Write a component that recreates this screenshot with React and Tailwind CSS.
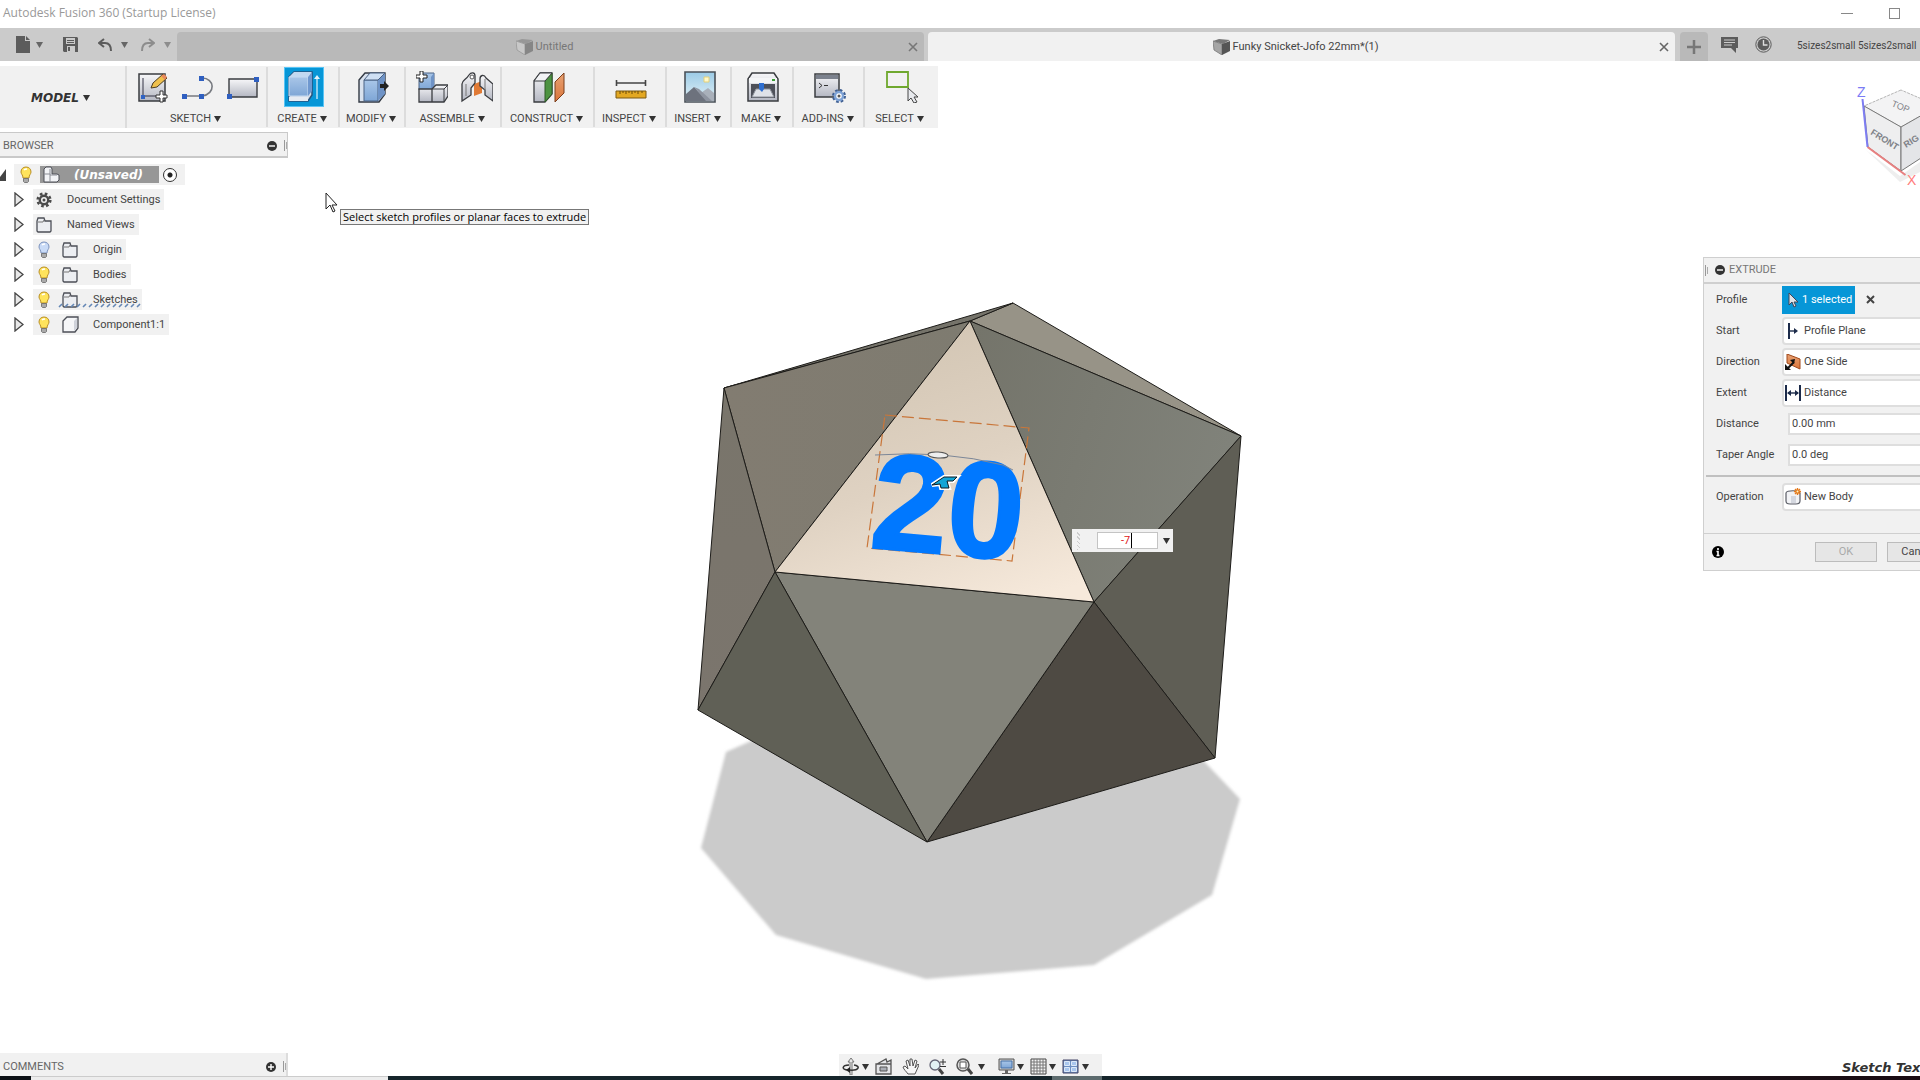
import React from "react";

const UI_FONT = "font-['Roboto','Liberation_Sans',sans-serif]";

function Caret({ className = "text-[#333]" }) {
  return (
    <svg viewBox="0 0 7 6" className={"h-[6px] w-[7px] shrink-0 " + className}>
      <path d="M0 0h7L3.5 6z" fill="currentColor" />
    </svg>
  );
}

function Icon({ w = 32, h = 32, children, className = "" }) {
  return (
    <svg width={w} height={h} viewBox={`0 0 ${w} ${h}`} className={"shrink-0 " + className} fill="none" aria-hidden="true">
      {children}
    </svg>
  );
}

function Gradients() {
  return (
    <svg width="0" height="0" className="absolute" aria-hidden="true">
      <defs>
        <linearGradient id="steel" x1="0" y1="0" x2="0" y2="1">
          <stop offset="0" stopColor="#f7f7f9" />
          <stop offset="1" stopColor="#b4b7c2" />
        </linearGradient>
        <linearGradient id="blue" x1="0" y1="0" x2="0" y2="1">
          <stop offset="0" stopColor="#a9c6e8" />
          <stop offset="1" stopColor="#7ea6d6" />
        </linearGradient>
        <linearGradient id="sky" x1="0" y1="0" x2="0" y2="1">
          <stop offset="0" stopColor="#9ccbe6" />
          <stop offset="1" stopColor="#e3f2f7" />
        </linearGradient>
        <linearGradient id="orange" x1="0" y1="0" x2="0" y2="1">
          <stop offset="0" stopColor="#e8a273" />
          <stop offset="1" stopColor="#d9743a" />
        </linearGradient>
      </defs>
    </svg>
  );
}

const PLUS = "M4 0h3v4h4v3H7v4H4V7H0V4h4z";

const SketchIcon = () => (
  <Icon>
    <path d="M2 3h26v27H2z" fill="url(#steel)" stroke="#3a3c40" strokeWidth="1.500" />
    <path d="M6 7v18h14" stroke="#334" strokeWidth="1" />
    <path d="M4 24h4v4H4z" fill="#2f63c4" />
    <path d="M14 17l2-5L26 3l4 4-10 9z" fill="#efc04c" stroke="#4a3b20" />
    <path d="M24 5l4 4 2-3-3-3z" fill="#e8895c" />
    <path d={PLUS} transform="translate(19 20)" fill="#fff" stroke="#333" />
  </Icon>
);
const LineIcon = () => (
  <Icon>
    <path d="M3 25h17c14-2 13-18 0-18" stroke="#777a80" strokeWidth="1.6" />
    <path d="M0 23h5v5H0zM17 23h5v5h-5zM17 5h5v5h-5z" fill="#2f5fc0" />
  </Icon>
);
const RectIcon = () => (
  <Icon>
    <path d="M2 8h28v18H2z" fill="url(#steel)" stroke="#3a3c40" strokeWidth="1.4" />
    <path d="M0 23h5v5H0zM27 6h5v5h-5z" fill="#2f5fc0" />
  </Icon>
);
const ExtrudeIcon = () => (
  <Icon w={38} h={38}>
    <path d="M4 9l5-5h18v23l-4 6H4z" fill="#d6dde8" stroke="#27527c" strokeWidth="1.500" />
    <path d="M4 9h19v19H4z" fill="url(#blue)" stroke="#c8dcf2" />
    <path d="M4 9l5-5h18l-4 5z" fill="#c3d9f1" />
    <path d="M23 9l4-5v19l-4 5z" fill="#6f98cf" />
    <path d="M4 29h19v4H4z" fill="#e6ebf2" />
    <path d="M32 31V10" stroke="#b9e0f5" strokeWidth="1.500" />
    <path d="M29 11l3-4 3 4z" fill="#dff1fb" />
  </Icon>
);
const ModifyIcon = () => (
  <Icon>
    <path d="M2 9l6-7h20v21l-6 8H2z" fill="#d9e2ee" stroke="#333a44" strokeWidth="1.4" />
    <path d="M7 9h14v21H7z" fill="url(#blue)" stroke="#4b6284" />
    <path d="M21 9l7-7v21l-7 7z" fill="#6f93c6" />
    <path d="M7 9l6-7h15l-7 7z" fill="#cfe0f4" stroke="#4b6284" />
    <path d="M23 13h4v-3l5 5-5 5v-3h-4z" fill="#222" />
  </Icon>
);
const AssembleIcon = () => (
  <Icon>
    <path d="M3 19V6l4-4h11v13l-3 4z" fill="url(#blue)" stroke="#4b6284" />
    <path d="M15 6l3-4v14l-3 3z" fill="#6f93c6" />
    <path d="M3 18h13v13H3zM16 18l4-4h12v11l-4 6H16z" fill="url(#steel)" stroke="#3a3c40" strokeWidth="1.3" />
    <path d="M16 18h12v13M28 18l4-4" stroke="#3a3c40" />
    <path d={PLUS} fill="#fff" stroke="#222" />
  </Icon>
);
const JointIcon = () => (
  <Icon>
    <path d="M13 13l8-3v12l-8 3z" fill="#e07a35" />
    <path d="M1 13C1 9 5 9 8 4c2-3 6-3 6 1v7l-4 5v7l-9 6z" fill="url(#steel)" stroke="#3a3c40" strokeWidth="1.3" />
    <path d="M5 13v12" stroke="#777" />
    <circle cx="11" cy="6" r="2" fill="#fff" stroke="#555" />
    <path d="M19 8c0-4 4-5 6-1l7 6v17l-8-6v-5l-5-4z" fill="url(#steel)" stroke="#3a3c40" strokeWidth="1.3" />
    <path d="M24 8v12" stroke="#777" />
  </Icon>
);
const ConstructIcon = () => (
  <Icon>
    <path d="M1 10l6-8h12v21l-7 8H1z" fill="url(#steel)" stroke="#3a3c40" strokeWidth="1.3" />
    <path d="M12 10l7-8v21l-7 8z" fill="#4d9342" stroke="#2e5a27" />
    <path d="M1 10h11l7-8H7z" fill="#f2f3f5" stroke="#3a3c40" />
    <path d="M22 11l9-9v20l-9 9z" fill="url(#orange)" stroke="#7a3e1c" />
  </Icon>
);
const InspectIcon = () => (
  <Icon>
    <path d="M1.5 9v6M30.5 9v6M2 12h28" stroke="#444" strokeWidth="1.6" />
    <path d="M1 20h30v7H1z" fill="#e3a822" stroke="#7d5a12" />
    <path d="M5 20v3m3-3v2m3-2v3m3-3v2m3-2v3m3-3v2m3-2v3m4-3v2" stroke="#6b4a08" />
  </Icon>
);
const InsertIcon = () => (
  <Icon>
    <path d="M1 1h30v30H1z" fill="url(#sky)" stroke="#4a5058" strokeWidth="1.6" />
    <path d="M20 6h5v5h-5z" fill="#fff8c8" stroke="#e3d07a" />
    <path d="M14 24l10-7 6 5v8H14z" fill="#a9b0ba" />
    <path d="M2 23l8-7 13 14H2z" fill="#6d727d" />
    <path d="M10 16l5 2 13 12h-6z" fill="#8e94a0" />
  </Icon>
);
const MakeIcon = () => (
  <Icon>
    <path d="M1 8l4-6h22l4 6v22H1z" fill="url(#steel)" stroke="#3a3c40" strokeWidth="1.500" />
    <path d="M2 7h28v5H2z" fill="#f4f5f7" />
    <path d="M25 8h3v2h-3z" fill="#3a9e36" />
    <path d="M4 13h24v14H4z" fill="#4d5059" />
    <path d="M9 18h14l4 8H5z" fill="#dfe2e8" stroke="#8c909a" />
    <path d="M12 12h5v6l-2 3-3-3z" fill="#2f6fd0" />
  </Icon>
);
const AddInsIcon = () => (
  <Icon>
    <path d="M1 3h24v23H1z" fill="url(#steel)" stroke="#3a3c40" strokeWidth="1.5" />
    <path d="M2 4h22v4H2z" fill="#7c828e" />
    <path d="M5 12l3 2.500-3 2.500M10 14.500h4" stroke="#333" />
    <circle cx="25" cy="25" r="5.500" stroke="#3f5f92" strokeWidth="3" strokeDasharray="2.500 1.820" />
    <circle cx="25" cy="25" r="4" fill="#fff" stroke="#7fa3d6" strokeWidth="2.500" />
    <circle cx="25" cy="25" r="1.500" fill="#555" />
  </Icon>
);
const SelectIcon = () => (
  <Icon>
    <path d="M1 1h21v15H1z" stroke="#6fa82e" strokeWidth="1.800" />
    <path d="M22 17v13l3-3 3 5 3-1-3-5h4z" fill="#e8eaee" stroke="#444" />
  </Icon>
);

const TOOL_GROUPS = [
  { name: "SKETCH", width: "w-[141px]", icons: [SketchIcon, LineIcon, RectIcon] },
  { name: "CREATE", width: "w-[72px]", icons: [ExtrudeIcon], active: true },
  { name: "MODIFY", width: "w-[66px]", icons: [ModifyIcon] },
  { name: "ASSEMBLE", width: "w-[96px]", icons: [AssembleIcon, JointIcon] },
  { name: "CONSTRUCT", width: "w-[93px]", icons: [ConstructIcon] },
  { name: "INSPECT", width: "w-[72px]", icons: [InspectIcon] },
  { name: "INSERT", width: "w-[65px]", icons: [InsertIcon] },
  { name: "MAKE", width: "w-[62px]", icons: [MakeIcon] },
  { name: "ADD-INS", width: "w-[71px]", icons: [AddInsIcon] },
  { name: "SELECT", width: "w-[73px]", icons: [SelectIcon] },
];

function TitleBar() {
  return (
    <header className="flex h-7 shrink-0 items-center bg-white pb-[2px] pl-[3px] text-[#999]">
      <h1 className="flex-1 font-['Open_Sans',sans-serif] text-[12px] leading-4">Autodesk Fusion 360 (Startup License)</h1>
      <button aria-label="Minimize" className="mr-9 flex h-4 w-3 items-center">
        <span className="h-px w-full bg-[#888]" />
      </button>
      <button aria-label="Maximize" className="mr-5 h-[11px] w-[11px] border border-[#888]" />
    </header>
  );
}

function DocCube({ dim }) {
  return (
    <Icon w={17} h={16} className={dim ? "opacity-50" : ""}>
      <path d="M0 2l6-2 11 1-7 4z" fill="#777" />
      <path d="M0 2l9 3v11l-8-5z" fill={dim ? "#d8d8d8" : "#a5a5a5"} stroke="#777" strokeWidth="0.800" />
      <path d="M9 5l8-3v10l-8 4z" fill="#555" />
    </Icon>
  );
}

function Tab({ title, active }) {
  return (
    <div
      className={
        "mt-1 flex min-w-0 flex-1 items-center rounded-t pl-1 " +
        (active ? "bg-[#f1f1f1] text-[#444]" : "bg-[#b9b9b9] text-[#777]")
      }
    >
      <button className="flex min-w-0 flex-1 items-center justify-center gap-[3px] pt-px text-[11px] leading-4">
        <DocCube dim={!active} />
        <span>{title}</span>
      </button>
      <button aria-label={"Close " + title} className="mr-[6px]">
        <Icon w={10} h={10}>
          <path d="M1 1l8 8M9 1L1 9" stroke={active ? "#666" : "#777"} strokeWidth="1.600" />
        </Icon>
      </button>
    </div>
  );
}

function TabBar() {
  return (
    <div className="flex h-[33px] shrink-0 bg-[#cbcbcb]">
      <div className="flex w-[177px] shrink-0 items-center pl-4 text-[#5c5c5c]">
        <button aria-label="File" className="flex items-center gap-[6px]">
          <Icon w={14} h={17}>
            <path d="M0 0h9v5h5v12H0z" fill="#5c5c5c" />
            <path d="M10 0l4 4h-4z" fill="#5c5c5c" />
          </Icon>
          <Caret className="text-[#666]" />
        </button>
        <button aria-label="Save" className="ml-5">
          <Icon w={15} h={15}>
            <path d="M0 0h14l1 1v14H1l-1-1z" fill="#5c5c5c" />
            <path d="M3 1h9v6H3zM4 9h8v6H4z" fill="#cbcbcb" />
            <path d="M4 3h7v1H4zM4 5h7v1H4zM5 10h2v4H5z" fill="#5c5c5c" />
          </Icon>
        </button>
        <button aria-label="Undo" className="ml-5 flex items-center gap-[9px]">
          <Icon w={14} h={13}>
            <path d="M6 1L1 5l5 4M1 5h6c4 0 6 3 6 8" stroke="#5c5c5c" strokeWidth="2" />
          </Icon>
          <Caret className="text-[#666]" />
        </button>
        <button aria-label="Redo" className="ml-[13px] flex items-center gap-[9px]">
          <Icon w={14} h={13}>
            <path d="M8 1l5 4-5 4M13 5H7c-4 0-6 3-6 8" stroke="#8d8d8d" strokeWidth="2" />
          </Icon>
          <Caret className="text-[#8d8d8d]" />
        </button>
      </div>
      <nav className="flex min-w-0 flex-1 gap-1" aria-label="Documents">
        <Tab title="Untitled" />
        <Tab title="Funky Snicket-Jofo 22mm*(1)" active />
      </nav>
      <div className="flex w-[245px] shrink-0 items-center pl-[5px]">
        <button aria-label="New document" className="mt-1 flex h-[29px] w-[28px] shrink-0 items-center justify-center rounded-t bg-[#b9b9b9]">
          <Icon w={14} h={14}>
            <path d="M7 0v14M0 7h14" stroke="#777" strokeWidth="2.500" />
          </Icon>
        </button>
        <button aria-label="Comments" className="ml-[13px]">
          <Icon w={17} h={16}>
            <path d="M0 0h17v11h-2v5l-5-5H0z" fill="#5c5c5c" />
            <path d="M3 3h11M3 5.500h11M3 8h8" stroke="#cbcbcb" />
          </Icon>
        </button>
        <button aria-label="Job status" className="ml-[17px]">
          <Icon w={17} h={17}>
            <circle cx="8.500" cy="8.500" r="7.700" stroke="#5c5c5c" />
            <circle cx="8.500" cy="8.500" r="6" fill="#5c5c5c" />
            <path d="M8.500 4v5h4" stroke="#ddd" strokeWidth="1.400" />
          </Icon>
        </button>
        <button className="ml-[25px] whitespace-nowrap pt-[2px] text-[10px] leading-4 text-[#444]">5sizes2small 5sizes2small</button>
      </div>
    </div>
  );
}

function Toolbar() {
  return (
    <div className="mt-[5px] flex h-[62px] w-fit bg-[#f1f1f1]">
      <div className="flex w-[127px] items-center justify-center border-r-2 border-[#dcdcdc] pr-1 pt-[2px]">
        <button className="flex items-center gap-1 font-['DejaVu_Sans',sans-serif] text-[12px] font-bold italic leading-4 text-[#333]">
          MODEL <Caret />
        </button>
      </div>
      {TOOL_GROUPS.map((g, i) => (
        <div key={g.name} className={"py-px " + g.width}>
          <div
            className={
              "flex h-[60px] flex-col items-center border-[#dcdcdc] " +
              (i < TOOL_GROUPS.length - 1 ? "border-r-2 pl-[2px]" : "")
            }
          >
            <div className="flex h-10 shrink-0 items-center gap-[13px]">
              {g.icons.map((I, k) => (
                <button
                  key={k}
                  aria-label={g.name + " tool " + (k + 1)}
                  className={g.active ? "border border-[#58c4f5] bg-[#0696d7]" : ""}
                >
                  <I />
                </button>
              ))}
            </div>
            <button className="mt-1 flex shrink-0 items-center gap-[3px] pr-1 text-[11px] leading-4 text-[#444]">
              {g.name} <Caret />
            </button>
          </div>
        </div>
      ))}
    </div>
  );
}

function Bulb({ off }) {
  return (
    <Icon w={12} h={17}>
      <path d="M6 1c3 0 5 2 5 5 0 2-2 3-2 6H3c0-3-2-4-2-6 0-3 2-5 5-5z" fill={off ? "#c9dbf7" : "#ffe45c"} stroke={off ? "#7d93bd" : "#b98f25"} />
      <path d="M4 4c1-1 2-1 3-1" stroke="#fff" strokeWidth="1.500" />
      <path d="M3.500 12.500h5v3l-1 1h-3l-1-1z" fill="#aaa" stroke="#666" strokeWidth="0.800" />
    </Icon>
  );
}
const Folder = () => (
  <Icon w={16} h={16}>
    <path d="M1 14V4l1-3h6l1 3h6v10l-1 1H2z" fill="#eceef2" stroke="#4c4f57" strokeWidth="1.300" />
    <path d="M2 5h5l1-2" stroke="#777" />
  </Icon>
);
const Box = () => (
  <Icon w={17} h={17}>
    <path d="M1 5l4-4h11v11l-3 4H1z" fill="#f5f6f8" stroke="#4c4f57" strokeWidth="1.300" />
    <path d="M12 5l3-3v10l-3 3z" fill="#cfd2da" />
  </Icon>
);
const Gear = () => (
  <Icon w={16} h={16}>
    <circle cx="8" cy="8" r="6.300" stroke="#4a4a4a" strokeWidth="2.600" strokeDasharray="2.600 2.350" />
    <circle cx="8" cy="8" r="4.200" stroke="#4a4a4a" strokeWidth="2.400" />
    <circle cx="8" cy="8" r="1.500" fill="#4a4a4a" />
  </Icon>
);

const TREE = [
  { label: "Document Settings", icon: Gear },
  { label: "Named Views", icon: Folder },
  { label: "Origin", icon: Folder, bulb: "off" },
  { label: "Bodies", icon: Folder, bulb: "on" },
  { label: "Sketches", icon: Folder, bulb: "on", hatched: true },
  { label: "Component1:1", icon: Box, bulb: "on" },
];

function Grip() {
  return (
    <span className="flex items-center gap-px">
      <span className="h-[11px] w-px bg-[#999]" />
      <span className="h-[7px] w-px bg-[#aaa]" />
    </span>
  );
}

function RoundButton({ label, plus }) {
  return (
    <button type="button" aria-label={label}>
      <Icon w={10} h={10}>
        <circle cx="5" cy="5" r="5" fill="#333" />
        <path d={plus ? "M2 5h6M5 2v6" : "M2 5h6"} stroke="#fff" strokeWidth="1.400" />
      </Icon>
    </button>
  );
}

function Browser() {
  return (
    <section className="mt-1 w-[288px]" aria-label="Browser">
      <div className="flex h-[26px] items-center border border-b-2 border-l-0 border-[#c9c9c9] bg-[#f1f1f1] pl-[3px] pt-[2px] text-[11px] leading-4 text-[#666]">
        <h2 className="flex-1">BROWSER</h2>
        <RoundButton label="Collapse browser" />
        <span className="ml-[7px]"><Grip /></span>
      </div>
      <ul className="mt-[6px] flex flex-col gap-1 text-[11px] leading-4 text-[#444]">
        <li className="flex h-[21px] items-center">
          <Icon w={6} h={12}>
            <path d="M6 0v12H0V8z" fill="#444" />
          </Icon>
          <div className="ml-2 flex h-full w-[171px] items-center bg-[#f1f1f1] pl-[6px]">
            <Bulb />
            <div className="ml-[8px] flex h-[17px] w-[119px] items-center bg-[#979797] pl-[3px]">
              <Icon w={17} h={17}>
                <path d="M1 3l2-2h5l1 2v5h5l2 1v5l-2 2H1z" fill="#f2f3f6" stroke="#4c4f57" />
                <path d="M1 8h6M7 3v13M7 9h7" stroke="#8a8d95" />
              </Icon>
              <span className="ml-[14px] font-['DejaVu_Sans',sans-serif] text-[12px] font-bold italic text-white">(Unsaved)</span>
            </div>
            <input type="radio" name="active-component" defaultChecked aria-label="Activate (Unsaved)" className="ml-1 h-[14px] w-[14px] appearance-none rounded-full border border-[#333] bg-[radial-gradient(circle,#222_0_2px,#fff_3px)]" />
          </div>
        </li>
        {TREE.map((n) => (
          <li key={n.label} className="flex h-[21px] items-center pl-[14px]">
            <button aria-label={"Expand " + n.label}>
              <Icon w={10} h={15}>
                <path d="M1 1l8 6.500L1 14z" fill="#e8e8e8" stroke="#444" strokeWidth="1.300" />
              </Icon>
            </button>
            <div className="relative ml-[9px] flex h-full items-center bg-[#f1f1f1] pr-1">
              {n.bulb && (
                <span className="flex w-[26px] justify-start pl-[5px]">
                  <Bulb off={n.bulb === "off"} />
                </span>
              )}
              <span className="flex w-[34px] pl-[3px]">
                <n.icon />
              </span>
              <span>{n.label}</span>
              {n.hatched && (
                <Icon w={86} h={5} className="absolute bottom-[2px] left-[25px]">
                  <path d="M1 4l3-3m3 3l3-3m3 3l3-3m3 3l3-3m3 3l3-3m3 3l3-3m3 3l3-3m3 3l3-3m3 3l3-3m3 3l3-3m3 3l3-3m3 3l3-3m3 3l3-3m3 3l3-3" stroke="#6487b5" strokeWidth="1.600" />
                </Icon>
              )}
            </div>
          </li>
        ))}
      </ul>
    </section>
  );
}

function ViewCube() {
  return (
    <svg width="64" height="112" viewBox="1856 82 64 112" className="mt-[21px] overflow-hidden" aria-label="View cube">
      <path d="M1866 150l34 26 20-14v10l-20 10z" fill="#ddd" opacity="0.500" />
      <path d="M1901 90l-37 16 37 21 37-21z" fill="#f3f3f4" stroke="#b5b5b5" strokeDasharray="3 1" />
      <path d="M1864 106l37 21v44l-33-24z" fill="#eeeeef" stroke="#777" />
      <path d="M1901 127l37-21v41l-37 24z" fill="#e4e5e8" stroke="#777" />
      <path d="M1862.500 99l5 48" stroke="#7d7df2" strokeWidth="2" />
      <path d="M1867.500 147l38 28" stroke="#e88080" strokeWidth="2" />
      <g className="font-['Liberation_Sans',sans-serif]">
        <text x="1857" y="97" fontSize="14" fill="#7b7bf5">Z</text>
        <text x="1907" y="185" fontSize="14" fill="#ff7b7b">X</text>
        <g fill="#808288" fontSize="9">
          <text transform="translate(1891 106) rotate(22)">TOP</text>
          <text transform="translate(1870 134) rotate(32)" fontWeight="bold">FRONT</text>
          <text transform="translate(1906 148) rotate(-32)" fontWeight="bold">RIG</text>
        </g>
      </g>
    </svg>
  );
}

const StartIcon = () => (
  <Icon w={16} h={16}>
    <path d="M4 0v16" stroke="#1c2b4a" strokeWidth="2" />
    <path d="M5 8h5" stroke="#1c2b4a" strokeWidth="1.400" />
    <path d="M9 5l4 3-4 3z" fill="#1c2b4a" />
  </Icon>
);
const DirectionIcon = () => (
  <Icon w={16} h={16}>
    <path d="M2 0l13 5v10L2 9z" fill="url(#orange)" stroke="#a0481a" />
    <path d="M2 15l7-7" stroke="#111" strokeWidth="2" />
    <path d="M0 16v-6l6 6zM10 5l-5 1 4 4z" fill="#111" />
  </Icon>
);
const ExtentIcon = () => (
  <Icon w={16} h={16}>
    <path d="M1 0v16M15 0v16" stroke="#1c2b4a" strokeWidth="2" />
    <path d="M3 8h10" stroke="#1c2b4a" strokeWidth="1.400" />
    <path d="M6 5L2 8l4 3zM10 5l4 3-4 3z" fill="#1c2b4a" />
  </Icon>
);
const BodyIcon = () => (
  <Icon w={16} h={17}>
    <path d="M1 5c0-3 14-3 14 0v8c0 3-2 3-4 3H5c-2 0-4 0-4-3z" fill="#f2f3f6" stroke="#5a5d66" strokeWidth="1.200" />
    <path d="M6 8h5v7H6z" fill="#d4d7df" />
    <path d="M12.500 0v7M9 3.500h7M10 1l5 5M15 1l-5 5" stroke="#e57a1c" strokeWidth="1.400" />
    <circle cx="12.500" cy="3.500" r="1" fill="#fff3c0" />
  </Icon>
);

function Row({ label, id, children }) {
  return (
    <div className="flex h-[31px] items-center pl-3">
      <label htmlFor={id} className="w-[66px] shrink-0">{label}</label>
      {children}
    </div>
  );
}

function Combo({ id, value, icon: I }) {
  return (
    <div className="flex h-[28px] flex-1 items-center rounded-sm border-2 border-[#dedede] bg-white pl-px">
      <I />
      <select id={id} className="ml-[3px] flex-1 appearance-none bg-transparent text-[11px] leading-4">
        <option>{value}</option>
      </select>
    </div>
  );
}

function ExtrudePanel() {
  const field = "ml-[6px] h-[22px] flex-1 border-2 border-[#dedede] bg-white px-[2px] text-[11px] leading-4";
  return (
    <aside className="mt-[63px] w-[217px] overflow-hidden" aria-label="Extrude">
      <form className="w-[260px] border border-[#cfcfcf] bg-[#f1f1f1] text-[11px] leading-4 text-[#444]">
        <div className="flex h-[26px] items-center border-b-2 border-[#cfcfcf] pl-px text-[#777]">
          <Grip />
          <span className="ml-[7px] flex items-center gap-1">
            <RoundButton label="Collapse panel" />
            <h2>EXTRUDE</h2>
          </span>
        </div>
        <Row label="Profile" id="profile">
          <button id="profile" type="button" className="flex h-[28px] w-[73px] items-center whitespace-nowrap bg-[#0696d7] pl-[6px] text-white">
            <Icon w={10} h={16}>
              <path d="M1 1v12l3-3 2 5 2-1-2-4h4z" fill="#dfe3e8" stroke="#445" />
            </Icon>
            <span className="ml-1">1 selected</span>
          </button>
          <button type="button" aria-label="Clear profile" className="ml-[11px]">
            <Icon w={9} h={9}>
              <path d="M1 1l7 7M8 1L1 8" stroke="#444" strokeWidth="2" />
            </Icon>
          </button>
        </Row>
        <Row label="Start" id="start"><Combo id="start" value="Profile Plane" icon={StartIcon} /></Row>
        <Row label="Direction" id="direction"><Combo id="direction" value="One Side" icon={DirectionIcon} /></Row>
        <Row label="Extent" id="extent"><Combo id="extent" value="Distance" icon={ExtentIcon} /></Row>
        <Row label="Distance" id="distance"><input id="distance" defaultValue="0.00 mm" className={field} /></Row>
        <Row label="Taper Angle" id="taper"><input id="taper" defaultValue="0.0 deg" className={field} /></Row>
        <div className="ml-[2px] mt-[5px] h-[2px] bg-[#c0c0c0]" />
        <div className="pb-[21px] pt-[4px]">
          <Row label="Operation" id="operation"><Combo id="operation" value="New Body" icon={BodyIcon} /></Row>
        </div>
        <div className="flex h-[37px] items-center border-t border-[#cfcfcf] pl-[8px]">
          <button type="button" aria-label="Information">
            <Icon w={12} h={12}>
              <circle cx="6" cy="6" r="6" fill="#000" />
              <path d="M6 2v2M4.500 5.500H6V9M4.500 9.500h3" stroke="#fff" strokeWidth="1.600" />
            </Icon>
          </button>
          <button type="button" disabled className="ml-[91px] h-[20px] w-[62px] border border-[#bcbcbc] bg-[#e6e6e6] text-[#aaa]">OK</button>
          <button type="button" className="ml-[10px] h-[20px] w-[62px] border border-[#bcbcbc] bg-[#e6e6e6]">Cancel</button>
        </div>
      </form>
    </aside>
  );
}

function Model() {
  return (
    <svg viewBox="0 61 1920 1019" preserveAspectRatio="xMidYMid slice" className="absolute inset-0 h-full w-full" aria-label="Icosahedron model">
      <defs>
        <linearGradient id="face" x1="0.400" y1="0" x2="0.800" y2="1">
          <stop offset="0" stopColor="#d2c5b3" />
          <stop offset="0.500" stopColor="#dfd2c2" />
          <stop offset="1" stopColor="#f6e9db" />
        </linearGradient>
        <linearGradient id="faceR" x1="0" y1="0" x2="1" y2="0.300">
          <stop offset="0" stopColor="#74746a" />
          <stop offset="1" stopColor="#80827a" />
        </linearGradient>
        <linearGradient id="faceL" x1="0" y1="0" x2="0" y2="1">
          <stop offset="0" stopColor="#79756b" />
          <stop offset="1" stopColor="#7b756d" />
        </linearGradient>
        <linearGradient id="faceU" x1="0" y1="0" x2="1" y2="0">
          <stop offset="0" stopColor="#827c71" />
          <stop offset="1" stopColor="#7e7b70" />
        </linearGradient>
        <filter id="soft" x="-5%" y="-5%" width="110%" height="110%">
          <feGaussianBlur stdDeviation="1.500" />
        </filter>
      </defs>
      <path d="M760 737l-34 15-25 96 75 87 150 44 168-14 118-70 28-96-42-44-280-80z" fill="#cbcbcb" filter="url(#soft)" />
      <g stroke="#1d1c19" strokeWidth="1" strokeLinejoin="round">
        <path d="M1013 303l228 133-271-115z" fill="#979387" />
        <path d="M724 388l289-85-43 18z" fill="#75736a" />
        <path d="M724 388l246-67-195 251z" fill="url(#faceU)" />
        <path d="M724 388l51 184-77 138z" fill="url(#faceL)" />
        <path d="M970 321l271 115-147 166z" fill="url(#faceR)" />
        <path d="M1241 436l-26 322-121-156z" fill="#5f5e55" />
        <path d="M1094 602l121 156-288 84z" fill="#4e4a43" />
        <path d="M775 572l319 30-167 240z" fill="#83837a" />
        <path d="M775 572l152 270-229-132z" fill="#606056" />
        <path d="M970 321l124 281-319-30z" fill="url(#face)" />
      </g>
      <path d="M885 415l144 13-17 133-145-13z" fill="none" stroke="#c9763a" strokeWidth="1.200" strokeDasharray="12 5" />
      <text
        transform="translate(869 547) rotate(5)"
        fontSize="136"
        fontWeight="bold"
        fill="#0078ff"
        stroke="#0078ff"
        strokeWidth="3"
        className="font-['Liberation_Sans',sans-serif]"
      >
        20
      </text>
      <path d="M875 455q70-5 128 10l10 5" fill="none" stroke="#7c8798" strokeWidth="1" />
      <ellipse cx="938" cy="455" rx="10" ry="3" fill="#eee" stroke="#555" transform="rotate(4 938 455)" />
      <path d="M932 485l12-8 13 0-4 4-6 0 2 7-8 0-1-4z" fill="#12a5d6" stroke="#fff" strokeWidth="4" />
      <path d="M932 485l12-8 13 0-4 4-6 0 2 7-8 0-1-4z" fill="#12a5d6" stroke="#0b1a22" />
    </svg>
  );
}

function ValueInput() {
  return (
    <div className="absolute left-1/2 top-[468px] ml-[112px] flex h-[23px] w-[101px] items-center bg-[#f1f1f1] pl-[5px]">
      <span className="h-[19px] w-[3px] bg-[repeating-linear-gradient(45deg,#ccc_0_1px,transparent_1px_3px)]" />
      <span className="relative ml-[17px] flex">
        <input aria-label="Extrude distance" defaultValue="-7" className="h-[17px] w-[61px] border border-[#c4c4c4] bg-white pr-1 text-center text-[11px] leading-4 text-[#e02020]" />
        <span className="absolute left-[34px] top-px h-[15px] w-px bg-black" />
      </span>
      <button aria-label="Distance options" className="ml-[5px] flex"><Caret /></button>
    </div>
  );
}

const NAV = [
  { name: "Orbit", caret: true, pad: "pr-[6px]", gap: "gap-[3px]", art: <><path d="M9 0l3 4h-2v13H8V4H6z" fill="#e8e8e8" stroke="#777" /><path d="M7 7C0 7-1 12 6 12M12 7c7 1 5 6-5 5" stroke="#333" strokeWidth="1.500" /><path d="M8 9v6l-4-3z" fill="#222" /></> },
  { name: "Look At", pad: "pr-[10px]", art: <><path d="M1 6h15v10H1zM2 6l9-5 1 3 4-2v4" fill="#e4e5e8" stroke="#555" strokeWidth="1.300" /><path d="M5 9h7v4H5z" fill="#aaadb5" stroke="#555" /></> },
  { name: "Pan", pad: "pr-[10px]", art: <path d="M6 16c-2-3-4-4-5-7l2-1 3 3-2-8 2-1 2 6V1l2 0 1 7 2-6 2 1-2 7 3-4 1 1-4 9z" fill="#f7f7f7" stroke="#555" /> },
  { name: "Zoom", pad: "pr-[10px]", art: <><circle cx="6" cy="7" r="5" fill="#e3f1f4" stroke="#667" strokeWidth="1.300" /><path d="M10 11l4 5" stroke="#444" strokeWidth="3" /><path d="M11 4h6M14 1v6M11 8.500h6" stroke="#333" /></> },
  { name: "Zoom Window", caret: true, pad: "pr-[13px]", gap: "gap-[5px]", art: <><circle cx="7" cy="7" r="6" fill="#ddd" stroke="#555" strokeWidth="1.500" /><path d="M4 4h6v6H4z" fill="#fff" stroke="#555" /><path d="M12 11l4 5" stroke="#444" strokeWidth="3" /></> },
  { name: "Display Settings", caret: true, pad: "pr-[6px]", gap: "gap-[2px]", art: <><path d="M1 1h15v11H1z" fill="#ccc" stroke="#555" /><path d="M3 3h11v7H3z" fill="url(#blue)" stroke="#4470a8" /><path d="M7 12h3v3h3v1H4v-1h3z" fill="#666" /></> },
  { name: "Grid and Snaps", caret: true, pad: "pr-[6px]", gap: "gap-[2px]", art: <><path d="M1 1h15v15H1z" fill="#f4f4f4" stroke="#444" /><path d="M4 1v15M7 1v15M10 1v15M13 1v15M1 4h15M1 7h15M1 10h15M1 13h15" stroke="#777" /></> },
  { name: "Viewports", caret: true, pad: "", gap: "gap-[3px]", art: <><path d="M1 2h15v13H1z" fill="#6d8fc2" stroke="#446" /><path d="M2.500 3.500h5v4h-5zM9.500 3.500h5v4h-5zM2.500 9.500h5v4h-5zM9.500 9.500h5v4h-5z" fill="#a8c6ee" stroke="#dce8f8" /></> },
];

function BottomBar() {
  return (
    <footer className="mt-auto">
      <div className="grid grid-cols-[1fr_auto_1fr] items-end">
        <div className="flex h-[23px] w-[288px] items-center border-r-2 border-[#ddd] bg-[#f1f1f1] pl-[3px] pt-1 text-[11px] leading-4 text-[#666]">
          <h2 className="flex-1">COMMENTS</h2>
          <RoundButton label="Add comment" plus />
          <span className="ml-[7px]"><Grip /></span>
        </div>
        <div className="ml-5 flex h-[22px] w-[263px] items-center bg-[#f1f1f1] pl-[3px] pt-[3px]">
          {NAV.map((n) => (
            <button key={n.name} aria-label={n.name} className={"flex shrink-0 items-center " + n.pad + " " + (n.gap || "")}>
              <Icon w={17} h={17}>{n.art}</Icon>
              {n.caret && <Caret />}
            </button>
          ))}
        </div>
        <div className="w-[78px] justify-self-end overflow-hidden whitespace-nowrap font-['DejaVu_Sans',sans-serif] text-[13px] font-bold italic leading-4 text-[#333]">
          Sketch Tex
        </div>
      </div>
      <div className="flex h-1 bg-[#16252b]">
        <span className="w-[31px] bg-[#0b0f14]" />
        <span className="w-[357px] border-t border-[#ccc] bg-[#ededed]" />
        <span className="ml-[664px] w-[50px] bg-[#5d6b6e]" />
        <span className="flex-1 bg-gradient-to-r from-[#16252b] to-[#1a0b12]" />
      </div>
    </footer>
  );
}

export default function App() {
  return (
    <div className={"flex h-screen flex-col overflow-hidden bg-white " + UI_FONT}>
      <Gradients />
      <TitleBar />
      <TabBar />
      <main className="relative flex min-h-0 flex-1 flex-col">
        <Model />
        <div className="relative flex items-start justify-between">
          <div>
            <Toolbar />
            <Browser />
          </div>
          <div className="flex flex-col items-end">
            <ViewCube />
            <ExtrudePanel />
          </div>
        </div>
        <div className="absolute left-[325px] top-[131px] flex items-start">
          <Icon w={13} h={21}>
            <path d="M1 1v16l4-4 3 7 2-1-3-6h5z" fill="#fff" stroke="#222" />
          </Icon>
          <div role="tooltip" className="ml-[2px] mt-[17px] border border-[#777] bg-[#f1f1f1] px-[2px] font-['Open_Sans',sans-serif] text-[11px] leading-[14px] text-black">
            Select sketch profiles or planar faces to extrude
          </div>
        </div>
        <ValueInput />
        <div className="relative mt-auto">
          <BottomBar />
        </div>
      </main>
    </div>
  );
}
